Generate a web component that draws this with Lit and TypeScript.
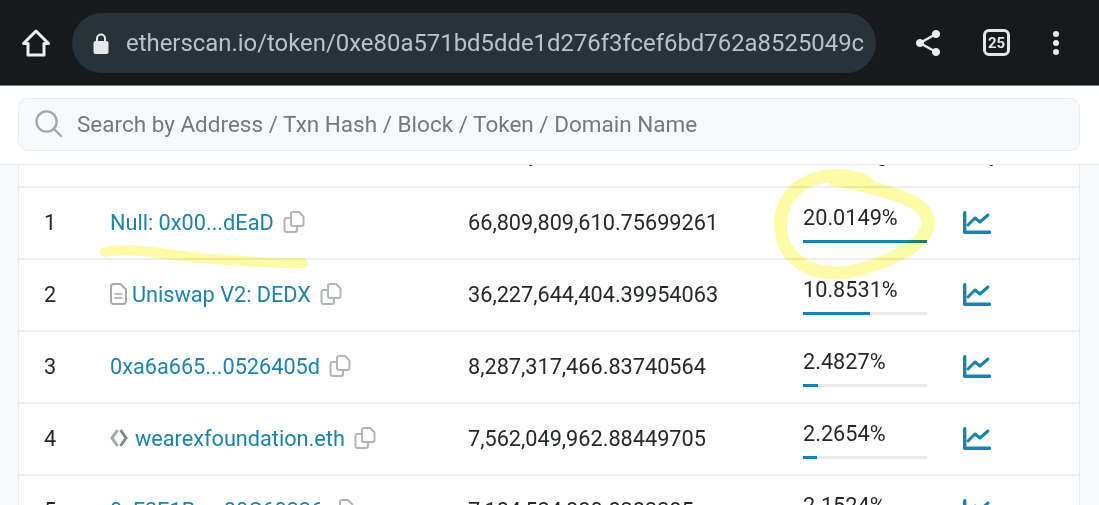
import { LitElement, html, css, nothing } from 'lit';
import { customElement } from 'lit/decorators.js';

type Holder = {
  rank: number;
  address: string;
  kind?: 'contract' | 'ens';
  quantity: string;
  percent: number;
};

const HOLDERS: Holder[] = [
  { rank: 1, address: 'Null: 0x00...dEaD', quantity: '66,809,809,610.75699261', percent: 20.0149 },
  { rank: 2, address: 'Uniswap V2: DEDX', kind: 'contract', quantity: '36,227,644,404.39954063', percent: 10.8531 },
  { rank: 3, address: '0xa6a665...0526405d', quantity: '8,287,317,466.83740564', percent: 2.4827 },
  { rank: 4, address: 'wearexfoundation.eth', kind: 'ens', quantity: '7,562,049,962.88449705', percent: 2.2654 },
  { rank: 5, address: '0xF3E1Be...80C60326', quantity: '7,184,524,880.8383385', percent: 2.1524 },
];

const copyIcon = html`<svg class="copy" viewBox="0 0 22 22" fill="none" stroke="currentColor" stroke-width="2" stroke-linejoin="round">
  <path d="M8 3a2 2 0 0 1 2-2h6l4.500 4.500V13a2 2 0 0 1-2 2H10a2 2 0 0 1-2-2z" />
  <path d="M8 7H3.500a2 2 0 0 0-2 2v10a2 2 0 0 0 2 2H12a2 2 0 0 0 2-2v-4" />
</svg>`;

const docIcon = html`<svg class="kind" viewBox="0 0 17 22" fill="none" stroke="currentColor" stroke-width="2" stroke-linejoin="round">
  <path d="M3 1h7.500L16 6.500V18.500a2.500 2.500 0 0 1-2.500 2.500h-10A2.500 2.500 0 0 1 1 18.500v-15A2.500 2.500 0 0 1 3 1z" />
  <path d="M4.500 11h8M4.500 15h8" stroke-width="1.600" />
</svg>`;

const ensIcon = html`<svg class="kind ens" viewBox="0 0 18 18" fill="none" stroke-width="3">
  <path d="M7.500 1 2 9l5.500 8" stroke="#a6aaad" />
  <path d="m10.500 1 5.500 8-5.500 8" stroke="#85898c" />
</svg>`;

const chartIcon = html`<svg class="chart" viewBox="0 0 28 23" fill="none" stroke="currentColor" stroke-width="3.400" stroke-linecap="round" stroke-linejoin="round">
  <path d="M1.700 1.700v19.600h24.800" />
  <path d="m5 14 7-7 5 4 8-7" stroke-width="3" />
</svg>`;

@customElement('app-root')
export class AppRoot extends LitElement {
  static styles = css`
    :host {
      display: block;
      position: relative;
      height: 505px;
      overflow: hidden;
      background: #f8f9fa;
      font-family: Roboto, 'Liberation Sans', sans-serif;
      color: #26292c;
    }

    .toolbar {
      display: flex;
      align-items: center;
      height: 85px;
      padding-left: 20px;
      background: #17191c;
      border-bottom: 1px solid #7b7e80;
    }

    .home {
      width: 32px;
      height: 32px;
      margin-right: 20px;
      color: #eceeef;
    }

    .pill {
      display: flex;
      align-items: center;
      width: 804px;
      height: 60px;
      padding: 0 11px 0 20px;
      box-sizing: border-box;
      border-radius: 30px;
      background: #263339;
      overflow: hidden;
    }

    .lock {
      flex: none;
      width: 18px;
      height: 24px;
      margin-right: 16px;
      color: #e6e8e9;
    }

    .url {
      overflow: hidden;
      white-space: nowrap;
      font-size: 23.9px;
      color: #b9c4ca;
    }

    .share {
      width: 28px;
      height: 28px;
      margin-left: 38px;
      color: #e8eaeb;
    }

    .tabs {
      display: flex;
      align-items: center;
      justify-content: center;
      width: 27px;
      height: 27px;
      margin-left: 41px;
      box-sizing: border-box;
      border: 3px solid #e4e6e7;
      border-radius: 6px;
      font-size: 15px;
      font-weight: 700;
      color: #e4e6e7;
    }

    .kebab {
      display: flex;
      flex-direction: column;
      gap: 3px;
      margin-left: 43px;
    }

    .kebab span {
      width: 6px;
      height: 6px;
      border-radius: 50%;
      background: #e8eaeb;
    }

    .search {
      height: 79px;
      padding: 12px 19px 13px 18px;
      box-sizing: border-box;
      background: #fff;
      border-bottom: 1px solid #e9ecef;
    }

    .search-box {
      display: flex;
      align-items: center;
      gap: 15px;
      height: 53px;
      padding: 0 0 2px 16px;
      box-sizing: border-box;
      background: #f8f9fa;
      border: 1px solid #e9ecef;
      border-radius: 10px;
      font-size: 22.5px;
      color: #74797e;
    }

    .search-box svg {
      width: 27px;
      height: 27px;
      color: #a3a8ac;
    }

    .table {
      margin: 0 19px 0 18px;
      background: #fff;
      border-left: 1px solid #e9ecef;
      border-right: 1px solid #e9ecef;
    }

    .row {
      display: grid;
      grid-template-columns: 91px 358px 335px 160px 1fr;
      align-items: center;
      box-sizing: border-box;
      height: 72px;
      padding-bottom: 2px;
      border-bottom: 2px solid #eceef0;
      font-size: 21.7px;
    }

    .head {
      height: 23px;
      padding-bottom: 0;
      overflow: hidden;
      align-items: start;
      font-size: 18.5px;
      font-weight: 500;
    }

    .head span {
      margin-top: -22px;
      line-height: 26px;
    }

    .head .analytics {
      margin-left: -11px;
    }

    .rank {
      padding-left: 25px;
    }

    .address {
      display: flex;
      align-items: center;
      color: #1c82ae;
    }

    .kind {
      flex: none;
      width: 17px;
      height: 22px;
      margin-right: 5px;
      color: #a6aaad;
    }

    .kind.ens {
      width: 18px;
      height: 18px;
      margin-right: 7px;
    }

    .copy {
      flex: none;
      width: 22px;
      height: 22px;
      margin-left: 9px;
      color: #b2b6b9;
    }

    .share-cell {
      align-self: start;
      width: 124px;
      margin-top: 17px;
    }

    .bar {
      height: 3px;
      margin-top: 10px;
      background: #e9ecef;
    }

    .bar div {
      height: 100%;
      background: #1583b8;
    }

    .chart {
      display: block;
      width: 28px;
      height: 23px;
      color: #1583b8;
    }

    .marker {
      position: absolute;
      inset: 0;
      width: 100%;
      height: 100%;
      pointer-events: none;
      mix-blend-mode: multiply;
    }
  `;

  private renderRow(holder: Holder) {
    return html`<div class="row">
      <span class="rank">${holder.rank}</span>
      <span class="address">
        ${holder.kind === 'contract' ? docIcon : nothing}
        ${holder.kind === 'ens' ? ensIcon : nothing}
        ${holder.address}${copyIcon}
      </span>
      <span>${holder.quantity}</span>
      <div class="share-cell">
        ${holder.percent.toFixed(4)}%
        <div class="bar"><div style="width: ${(holder.percent / 20.0149) * 100}%"></div></div>
      </div>
      ${chartIcon}
    </div>`;
  }

  render() {
    return html`
      <div class="toolbar">
        <svg class="home" viewBox="0 0 32 32" fill="none" stroke="currentColor" stroke-width="3" stroke-linejoin="round">
          <path d="M16 4 3.500 16.500H8V28h16V16.500h4.500z" />
        </svg>
        <div class="pill">
          <svg class="lock" viewBox="0 0 18 24" fill="currentColor">
            <path d="M4 10V7.500a5 5 0 0 1 10 0V10h.5a2 2 0 0 1 2 2v9a2 2 0 0 1-2 2h-11a2 2 0 0 1-2-2v-9a2 2 0 0 1 2-2zm2 0h6V7.500a3 3 0 0 0-6 0z" />
          </svg>
          <span class="url">etherscan.io/token/0xe80a571bd5dde1d276f3fcef6bd762a8525049c</span>
        </div>
        <svg class="share" viewBox="0 0 28 28" fill="currentColor" stroke="currentColor">
          <path d="M22 5 6 14l16 9" fill="none" stroke-width="2.500" />
          <circle cx="22" cy="5" r="3.600" />
          <circle cx="6" cy="14" r="3.600" />
          <circle cx="22" cy="23" r="3.600" />
        </svg>
        <div class="tabs">25</div>
        <div class="kebab"><span></span><span></span><span></span></div>
      </div>

      <div class="search">
        <div class="search-box">
          <svg viewBox="0 0 28 28" fill="none" stroke="currentColor" stroke-width="2.400" stroke-linecap="round">
            <circle cx="12" cy="12" r="10.500" />
            <path d="m19.500 19.500 7.500 7.500" />
          </svg>
          Search by Address / Txn Hash / Block / Token / Domain Name
        </div>
      </div>

      <div class="table">
        <div class="row head">
          <span class="rank">Rank</span>
          <span>Address</span>
          <span>Quantity</span>
          <span>Percentage</span>
          <span class="analytics">Analytics</span>
        </div>
        ${HOLDERS.map((holder) => this.renderRow(holder))}
      </div>

      <svg class="marker" viewBox="0 0 1099 505" fill="none" stroke="#fdfba6" stroke-linecap="round" stroke-linejoin="round">
        <path stroke-width="10" d="M105 252C130 246 170 256 210 259 245 261 275 264 303 263" />
        <path stroke-width="13" d="M868 183C850 172 815 172 795 190 775 210 775 245 800 263 825 279 850 274 880 263 905 253 929 240 928 222 928 205 905 197 880 190 865 186 850 182 835 180" />
      </svg>
    `;
  }
}

declare global {
  interface HTMLElementTagNameMap {
    'app-root': AppRoot;
  }
}
